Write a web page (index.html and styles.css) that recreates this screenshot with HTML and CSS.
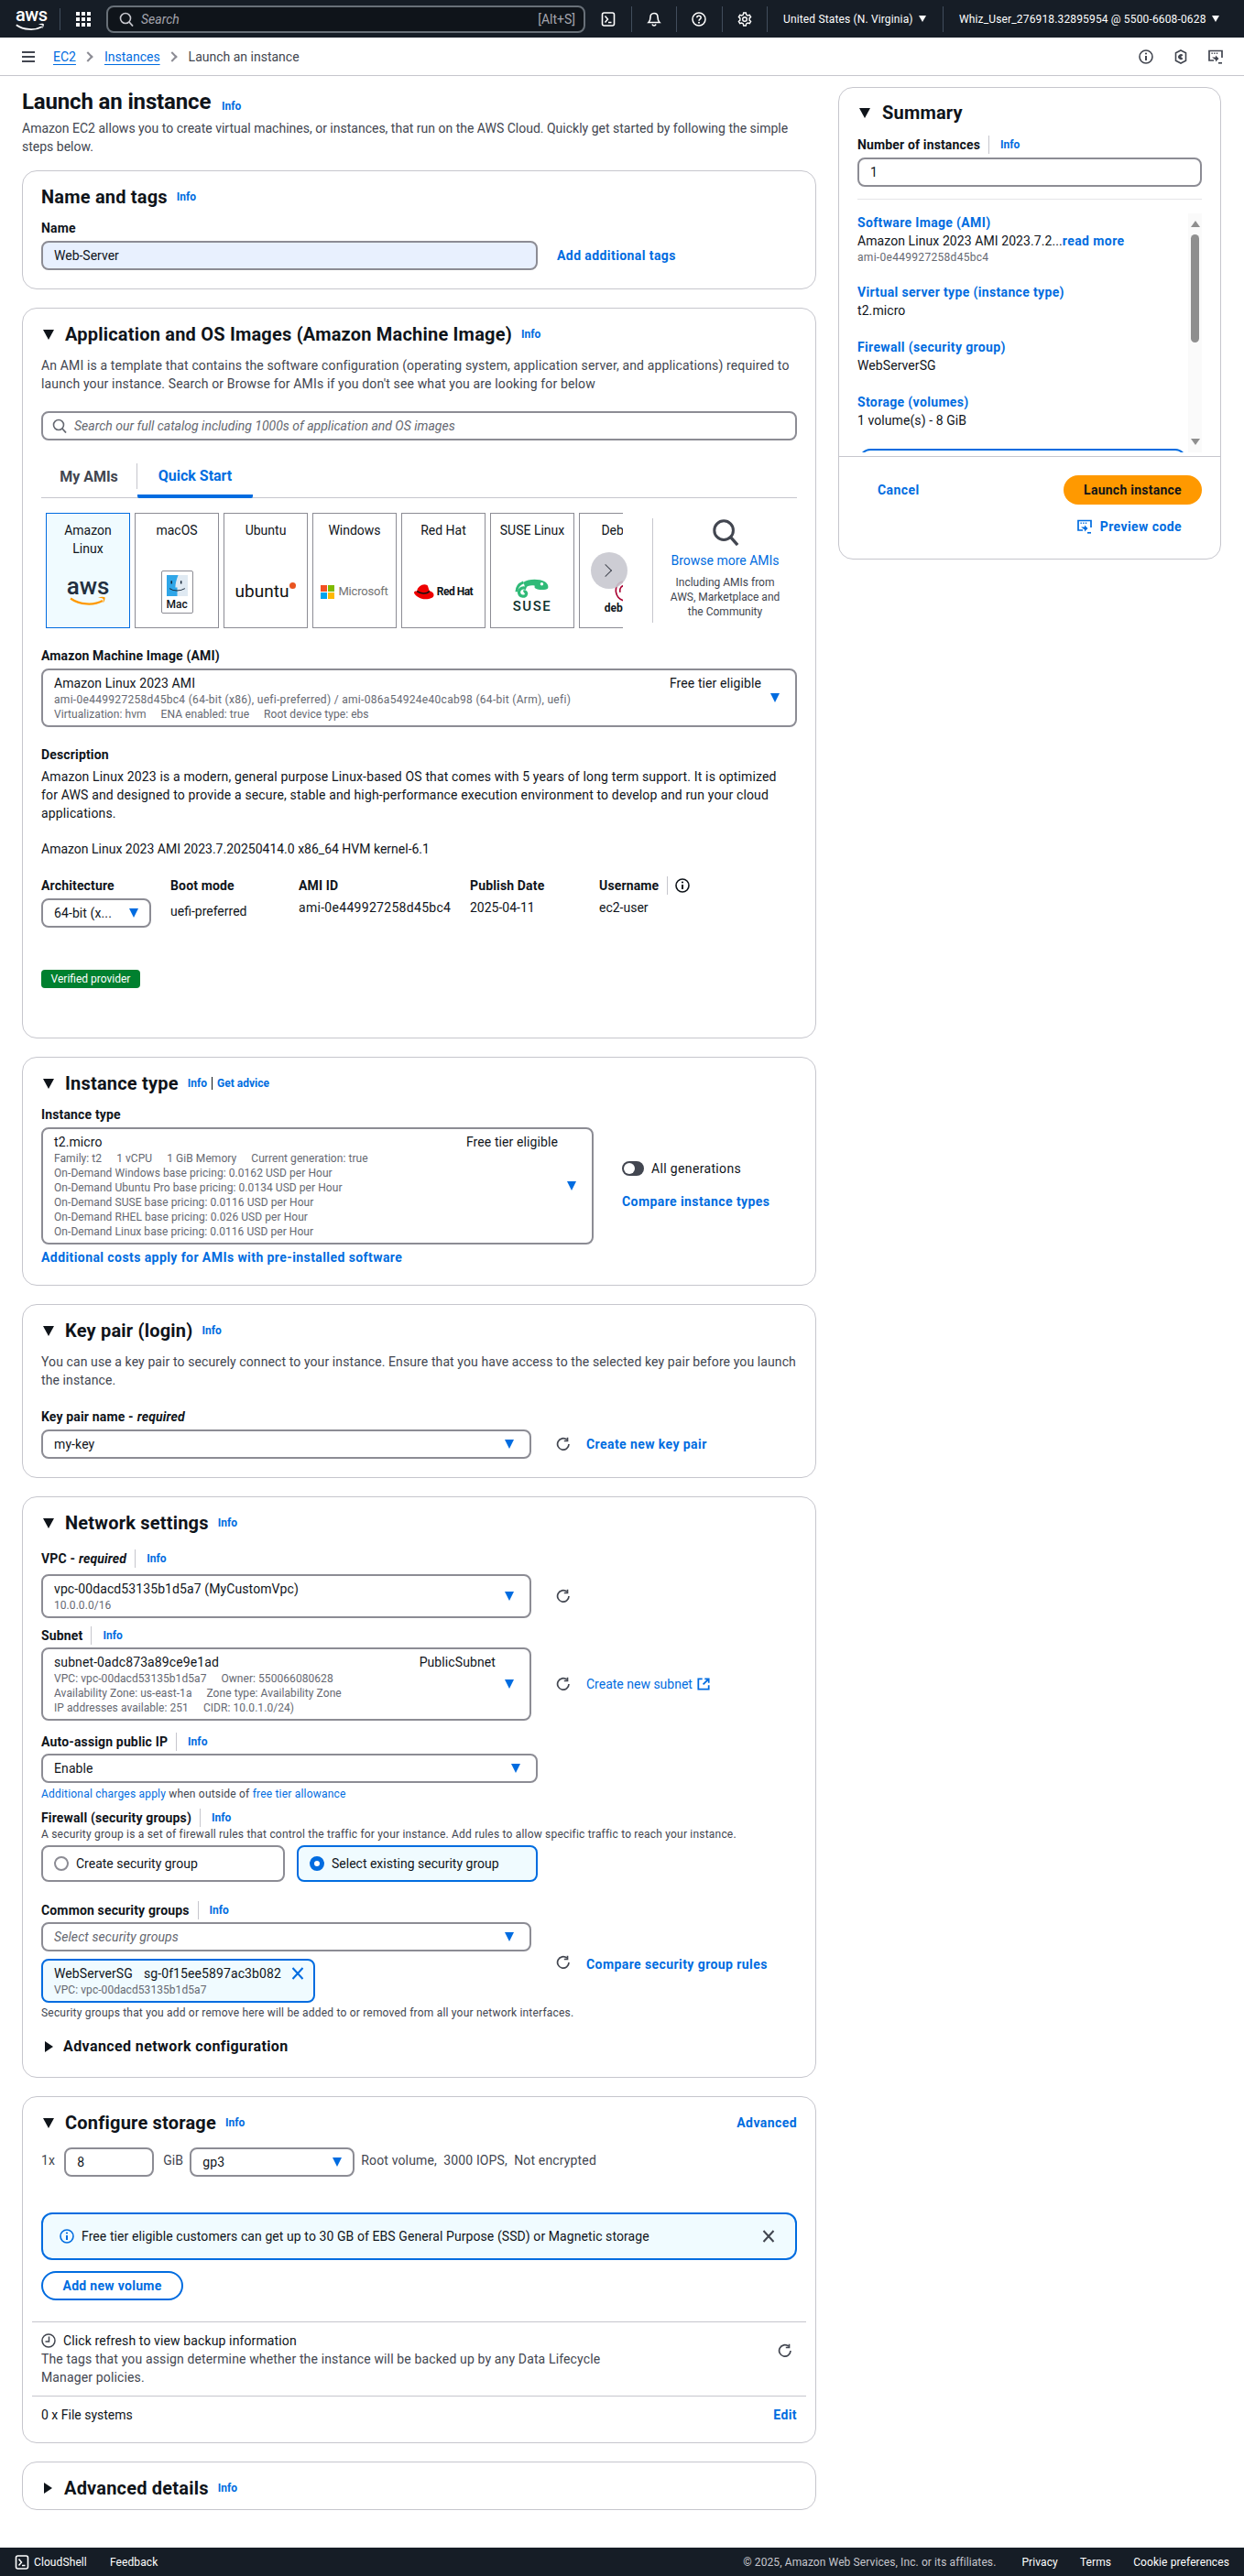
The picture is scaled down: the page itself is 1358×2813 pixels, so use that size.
FILE: index.html
```html
<!DOCTYPE html>
<html lang="en">
<head>
    <meta charset="UTF-8">
    <title>Launch an instance | EC2</title>
    <link rel="stylesheet" href="styles.css">
</head>
<body>
<svg class="sprite" xmlns="http://www.w3.org/2000/svg">
    <symbol id="i-search" viewBox="0 0 16 16"><circle cx="7" cy="7" r="5.5" fill="none" stroke="currentColor" stroke-width="1.6"/><path d="M11 11l4 4.5" stroke="currentColor" stroke-width="1.8" fill="none"/></symbol>
    <symbol id="i-shell" viewBox="0 0 16 16"><rect x="1.5" y="1" width="13" height="14" rx="2" fill="none" stroke="currentColor" stroke-width="1.6"/><path d="M4.5 4.5L7.5 8l-3 3.5M8 11.5h3.5" fill="none" stroke="currentColor" stroke-width="1.5"/></symbol>
    <symbol id="i-bell" viewBox="0 0 16 16"><path d="M8 1.5c-2.8 0-4 2-4 4.2 0 3-.6 4.3-2 5.8h12c-1.4-1.5-2-2.800-2-5.800 0-2.200-1.200-4.200-4-4.200zM6 13.500c.3 1 1 1.500 2 1.500s1.700-.5 2-1.500" fill="none" stroke="currentColor" stroke-width="1.600"/></symbol>
    <symbol id="i-help" viewBox="0 0 16 16"><circle cx="8" cy="8" r="7" fill="none" stroke="currentColor" stroke-width="1.500"/><path d="M5.800 6.200C5.800 5 6.800 4.300 8 4.300s2.200.8 2.200 1.900c0 1.700-2.200 1.700-2.200 3.500" fill="none" stroke="currentColor" stroke-width="1.500"/><circle cx="8" cy="11.800" r="1" fill="currentColor"/></symbol>
    <symbol id="i-gear" viewBox="0 0 16 16"><path d="M6.700 1h2.600l.4 2 1.700 1 1.900-.7 1.300 2.300-1.500 1.300v2.200l1.500 1.300-1.300 2.300-1.900-.7-1.700 1-.4 2H6.700l-.4-2-1.700-1-1.900.7-1.300-2.300 1.500-1.300V6.900L1.400 5.600l1.300-2.300 1.900.7 1.700-1z" fill="none" stroke="currentColor" stroke-width="1.400"/><circle cx="8" cy="8" r="2.300" fill="none" stroke="currentColor" stroke-width="1.400"/></symbol>
    <symbol id="i-info" viewBox="0 0 16 16"><circle cx="8" cy="8" r="7" fill="none" stroke="currentColor" stroke-width="1.600"/><path d="M8 7v5" stroke="currentColor" stroke-width="2"/><circle cx="8" cy="4.500" r="1.100" fill="currentColor"/></symbol>
    <symbol id="i-hex" viewBox="0 0 16 16"><path d="M8 1l5.500 2.800v8.400L8 15l-5.500-2.800V3.800z" fill="none" stroke="currentColor" stroke-width="1.600"/><path d="M10.500 6.200A3 3 0 1 0 10.500 10L8 8z" fill="currentColor"/></symbol>
    <symbol id="i-code" viewBox="0 0 16 16"><path d="M6 12H1V1.500h14V9" fill="none" stroke="currentColor" stroke-width="1.700"/><path d="M3.500 4.200h1.300M6.200 4.200h1.300M8.900 4.200h1.300" stroke="currentColor" stroke-width="1.500"/><path d="M4 8.500h4v-2l3.500 3.500L8 13.500v-2" fill="currentColor"/><path d="M11 14.800h4" stroke="currentColor" stroke-width="1.700"/></symbol>
    <symbol id="i-refresh" viewBox="0 0 16 16"><path d="M11.800 3.200A6.200 6.200 0 1 0 14 8" fill="none" stroke="currentColor" stroke-width="1.700"/><path d="M12.500.8v3.700H8.800" fill="none" stroke="currentColor" stroke-width="1.700"/></symbol>
    <symbol id="i-ext" viewBox="0 0 16 16"><path d="M6.500 1.500H1.500v13h13v-5" fill="none" stroke="currentColor" stroke-width="2"/><path d="M9.500 1.500h5v5M14.500 1.500L7.500 8.500" fill="none" stroke="currentColor" stroke-width="2"/></symbol>
    <symbol id="i-x" viewBox="0 0 16 16"><path d="M2.500 2l11 12M13.500 2l-11 12" fill="none" stroke="currentColor" stroke-width="2"/></symbol>
    <symbol id="i-clock" viewBox="0 0 16 16"><circle cx="8" cy="8" r="7" fill="none" stroke="currentColor" stroke-width="1.500"/><path d="M8.500 3.500V9H4.500" fill="none" stroke="currentColor" stroke-width="1.500"/></symbol>
    <symbol id="i-smile" viewBox="0 0 40 12"><path d="M1 2.500c10 7 25 8 35 2.500" fill="none" stroke="currentColor" stroke-width="2.200"/><path d="M31 1.500c3-1 6-1 7.500-.3.500 1.500-.5 4.300-2 6.300.3-2 .6-3.500.2-4.600-1.500-.8-3.500-1.200-5.700-1.400z" fill="currentColor"/></symbol>
</svg>

<header class="top-nav">
    <div class="nav-logo">
        <span class="nav-aws">aws</span>
        <svg class="nav-smile"><use href="#i-smile"/></svg>
    </div>
    <span class="nav-sep"></span>
    <div class="nav-grid"><i></i><i></i><i></i><i></i><i></i><i></i><i></i><i></i><i></i></div>
    <div class="nav-search">
        <svg class="ic-16"><use href="#i-search"/></svg>
        <span class="nav-search-text">Search</span>
        <span class="nav-search-key">[Alt+S]</span>
    </div>
    <div class="nav-btn"><svg class="ic-16"><use href="#i-shell"/></svg></div>
    <div class="nav-btn sep-left"><svg class="ic-16"><use href="#i-bell"/></svg></div>
    <div class="nav-btn sep-left"><svg class="ic-16"><use href="#i-help"/></svg></div>
    <div class="nav-btn sep-left"><svg class="ic-16"><use href="#i-gear"/></svg></div>
    <div class="nav-menu region">United States (N. Virginia) <b class="nav-caret"></b></div>
    <div class="nav-menu user">Whiz_User_276918.32895954 @ 5500-6608-0628 <b class="nav-caret"></b></div>
</header>

<nav class="crumbs">
    <div class="burger"><i></i><i></i><i></i></div>
    <a class="crumb">EC2</a><span class="crumb-arrow"></span>
    <a class="crumb">Instances</a><span class="crumb-arrow"></span>
    <span class="crumb-here">Launch an instance</span>
    <div class="crumb-tools">
        <svg class="ic-16"><use href="#i-info"/></svg>
        <svg class="ic-16"><use href="#i-hex"/></svg>
        <svg class="ic-16"><use href="#i-code"/></svg>
    </div>
</nav>

<main class="page">
    <div class="col-main">
        <div class="page-head">
            <h1>Launch an instance <a class="info">Info</a></h1>
            <p>Amazon EC2 allows you to create virtual machines, or instances, that run on the AWS Cloud. Quickly get started by following the simple steps below.</p>
        </div>

        <section class="card">
            <h2>Name and tags <a class="info">Info</a></h2>
            <div class="label mt-13">Name</div>
            <div class="name-row">
                <div class="input filled">Web-Server</div>
                <a class="link">Add additional tags</a>
            </div>
        </section>

        <section class="card">
            <h2><span class="tri-down"></span>Application and OS Images (Amazon Machine Image) <a class="info">Info</a></h2>
            <p class="text mt-13">An AMI is a template that contains the software configuration (operating system, application server, and applications) required to launch your instance. Search or Browse for AMIs if you don't see what you are looking for below</p>
            <div class="input search-input">
                <svg class="ic-16"><use href="#i-search"/></svg>
                <em>Search our full catalog including 1000s of application and OS images</em>
            </div>
            <div class="tabs">
                <span class="tab">My AMIs</span>
                <span class="tab active">Quick Start</span>
            </div>
            <div class="tile-row">
                <div class="tile-strip">
                    <div class="tile selected">
                        <div>Amazon Linux</div>
                        <div class="tile-logo">
                            <span class="logo-aws">aws</span>
                            <svg class="logo-smile"><use href="#i-smile"/></svg>
                        </div>
                    </div>
                    <div class="tile">
                        <div>macOS</div>
                        <div class="tile-logo">
                            <div class="logo-mac">
                                <svg viewBox="0 0 22 22" class="finder"><rect width="22" height="22" fill="#dfe9f2"/><path d="M0 0h12c-2 5-3 9-3 13h2v9H0z" fill="#2fa6e8"/><path d="M5 6v3M15 6v3" stroke="#123" stroke-width="1.400"/><path d="M3 14c4 3 11 3 16 0" stroke="#123" fill="none"/></svg>
                                <span>Mac</span>
                            </div>
                        </div>
                    </div>
                    <div class="tile">
                        <div>Ubuntu</div>
                        <div class="tile-logo">
                            <div class="logo-ubuntu">ubuntu<i></i></div>
                        </div>
                    </div>
                    <div class="tile">
                        <div>Windows</div>
                        <div class="tile-logo">
                            <div class="logo-ms">
                                <div class="ms-squares"><i></i><i></i><i></i><i></i></div>
                                <span>Microsoft</span>
                            </div>
                        </div>
                    </div>
                    <div class="tile">
                        <div>Red Hat</div>
                        <div class="tile-logo">
                            <div class="logo-rh">
                                <svg viewBox="0 0 24 20" class="rh-hat"><path d="M7 3c2-2 6-3 9-1 1 2 1.500 5 2.500 6.500 3 1 5 2.500 5 5 0 3-4 5-10 5S1 14 0 11c0-2 1.500-2.500 3.500-2 0-2.500 1.500-4 3.500-6z" fill="#e00"/><path d="M3.500 9c4 3 11 4 15 0" stroke="#111" stroke-width="1.800" fill="none"/></svg>
                                <span>Red Hat</span>
                            </div>
                        </div>
                    </div>
                    <div class="tile">
                        <div>SUSE Linux</div>
                        <div class="tile-logo bottom">
                            <svg viewBox="0 0 40 22" class="suse-mark"><path d="M10 4C15 0 28 0 34 3c4 2 5 6 4 8-2 2-8 2-12 1-3-1-4-2-3-4-4-1-9 0-11 3z" fill="#30ba78"/><path d="M13 11C7 9 4 13 5 17c1 4 7 4 8 1 1-2-1-4-3-3" fill="none" stroke="#30ba78" stroke-width="3.400"/><path d="M10 4c-5 2-8 6-8 11" fill="none" stroke="#30ba78" stroke-width="3"/><circle cx="31" cy="6" r="1.800" fill="#fff"/></svg>
                            <span class="logo-suse">SUSE</span>
                        </div>
                    </div>
                    <div class="tile">
                        <div>Debian</div>
                        <div class="tile-logo bottom">
                            <svg viewBox="0 0 24 26" class="deb-mark"><path d="M15 2C8 3 5 9 6 15c1 5 5 9 10 10M15 7c-4 1-5 5-4 8" fill="none" stroke="#a80030" stroke-width="1.800"/></svg>
                            <span class="logo-deb">debian</span>
                        </div>
                    </div>
                </div>
                <button class="tile-next"><span class="chev"></span></button>
                <div class="browse">
                    <svg class="browse-ic"><use href="#i-search"/></svg>
                    <a class="link-plain">Browse more AMIs</a>
                    <small>Including AMIs from AWS, Marketplace and the Community</small>
                </div>
            </div>

            <div class="label mt-20">Amazon Machine Image (AMI)</div>
            <div class="sel mt-4">
                <div class="sel-body">
                    <div class="sel-top"><span>Amazon Linux 2023 AMI</span><span>Free tier eligible</span></div>
                    <div class="sub num">ami-0e449927258d45bc4 (64-bit (x86), uefi-preferred) / ami-086a54924e40cab98 (64-bit (Arm), uefi)</div>
                    <div class="sub spaced"><span>Virtualization: hvm</span><span>ENA enabled: true</span><span>Root device type: ebs</span></div>
                </div>
                <span class="arrow"></span>
            </div>

            <div class="label mt-20">Description</div>
            <p class="text-dark wide-text mt-4">Amazon Linux 2023 is a modern, general purpose Linux-based OS that comes with 5 years of long term support. It is optimized for AWS and designed to provide a secure, stable and high-performance execution environment to develop and run your cloud applications.</p>
            <p class="text-dark mt-19">Amazon Linux 2023 AMI 2023.7.20250414.0 x86_64 HVM kernel-6.1</p>

            <div class="ami-meta">
                <div class="meta-arch">
                    <div class="label">Architecture</div>
                    <div class="sel arch mt-4"><div class="sel-body">64-bit (x...</div><span class="arrow"></span></div>
                </div>
                <div class="meta-boot">
                    <div class="label">Boot mode</div>
                    <div class="text-dark boot-val">uefi-preferred</div>
                </div>
                <div class="meta-id">
                    <div class="label">AMI ID</div>
                    <div class="text-dark meta-val num">ami-0e449927258d45bc4</div>
                </div>
                <div class="meta-date">
                    <div class="label">Publish Date</div>
                    <div class="text-dark meta-val">2025-04-11</div>
                </div>
                <div>
                    <div class="label label-tools">Username<span class="bar"></span><svg class="ic-16 ink"><use href="#i-info"/></svg></div>
                    <div class="text-dark meta-val">ec2-user</div>
                </div>
            </div>
            <span class="badge">Verified provider</span>
        </section>

        <section class="card">
            <h2><span class="tri-down"></span>Instance type <a class="info">Info</a><span class="head-bar"></span><a class="info near">Get advice</a></h2>
            <div class="label mt-13">Instance type</div>
            <div class="type-row mt-4">
                <div class="sel type-sel">
                    <div class="sel-body">
                        <div class="sel-top"><span>t2.micro</span><span>Free tier eligible</span></div>
                        <div class="sub spaced"><span>Family: t2</span><span>1 vCPU</span><span>1 GiB Memory</span><span>Current generation: true</span></div>
                        <div class="sub">On-Demand Windows base pricing: 0.0162 USD per Hour</div>
                        <div class="sub">On-Demand Ubuntu Pro base pricing: 0.0134 USD per Hour</div>
                        <div class="sub">On-Demand SUSE base pricing: 0.0116 USD per Hour</div>
                        <div class="sub">On-Demand RHEL base pricing: 0.026 USD per Hour</div>
                        <div class="sub">On-Demand Linux base pricing: 0.0116 USD per Hour</div>
                    </div>
                    <span class="arrow"></span>
                </div>
                <div class="type-side">
                    <div class="toggle-row"><span class="toggle"></span><span class="text-dark gens">All generations</span></div>
                    <a class="link">Compare instance types</a>
                </div>
            </div>
            <a class="link block mt-4">Additional costs apply for AMIs with pre-installed software</a>
        </section>

        <section class="card">
            <h2><span class="tri-down"></span>Key pair (login) <a class="info">Info</a></h2>
            <p class="text key-text mt-13">You can use a key pair to securely connect to your instance. Ensure that you have access to the selected key pair before you launch the instance.</p>
            <div class="label mt-20">Key pair name - <em>required</em></div>
            <div class="action-row mt-4">
                <div class="sel wide"><div class="sel-body">my-key</div><span class="arrow"></span></div>
                <svg class="ic-16 refresh"><use href="#i-refresh"/></svg>
                <a class="link">Create new key pair</a>
            </div>
        </section>

        <section class="card">
            <h2><span class="tri-down"></span>Network settings <a class="info">Info</a></h2>
            <div class="label mt-18">VPC - <em>required</em><span class="bar"></span><a class="info">Info</a></div>
            <div class="action-row mt-7">
                <div class="sel wide">
                    <div class="sel-body">
                        <div>vpc-00dacd53135b1d5a7 (MyCustomVpc)</div>
                        <div class="sub">10.0.0.0/16</div>
                    </div>
                    <span class="arrow"></span>
                </div>
                <svg class="ic-16 refresh"><use href="#i-refresh"/></svg>
            </div>
            <div class="label mt-9">Subnet<span class="bar"></span><a class="info">Info</a></div>
            <div class="action-row mt-3">
                <div class="sel wide">
                    <div class="sel-body">
                        <div class="sel-top"><span>subnet-0adc873a89ce9e1ad</span><span>PublicSubnet</span></div>
                        <div class="sub spaced"><span>VPC: vpc-00dacd53135b1d5a7</span><span>Owner: 550066080628</span></div>
                        <div class="sub spaced"><span>Availability Zone: us-east-1a</span><span>Zone type: Availability Zone</span></div>
                        <div class="sub spaced"><span>IP addresses available: 251</span><span>CIDR: 10.0.1.0/24)</span></div>
                    </div>
                    <span class="arrow"></span>
                </div>
                <svg class="ic-16 refresh"><use href="#i-refresh"/></svg>
                <a class="link-plain">Create new subnet <svg class="ic-14"><use href="#i-ext"/></svg></a>
            </div>
            <div class="label mt-13">Auto-assign public IP<span class="bar"></span><a class="info">Info</a></div>
            <div class="sel wider mt-3"><div class="sel-body">Enable</div><span class="arrow"></span></div>
            <div class="note mt-4"><a>Additional charges apply</a> when outside of <a>free tier allowance</a></div>
            <div class="label mt-8">Firewall (security groups)<span class="bar"></span><a class="info">Info</a></div>
            <div class="note">A security group is a set of firewall rules that control the traffic for your instance. Add rules to allow specific traffic to reach your instance.</div>
            <div class="radio-row mt-4">
                <div class="radio-box"><span class="radio"></span>Create security group</div>
                <div class="radio-box on"><span class="radio"></span>Select existing security group</div>
            </div>
            <div class="label mt-21">Common security groups<span class="bar"></span><a class="info">Info</a></div>
            <div class="action-row top mt-3">
                <div class="wide">
                    <div class="sel"><div class="sel-body"><em class="placeholder">Select security groups</em></div><span class="arrow"></span></div>
                    <div class="token">
                        <div>
                            <div class="token-top"><span>WebServerSG</span><span>sg-0f15ee5897ac3b082</span></div>
                            <div class="sub">VPC: vpc-00dacd53135b1d5a7</div>
                        </div>
                        <svg class="ic-16 token-x"><use href="#i-x"/></svg>
                    </div>
                </div>
                <svg class="ic-16 refresh compare-gap"><use href="#i-refresh"/></svg>
                <a class="link compare-gap">Compare security group rules</a>
            </div>
            <div class="note hint">Security groups that you add or remove here will be added to or removed from all your network interfaces.</div>
            <div class="adv-net"><span class="tri-right"></span>Advanced network configuration</div>
        </section>

        <section class="card">
            <h2 class="spread"><span><span class="tri-down"></span>Configure storage <a class="info">Info</a></span><a class="link">Advanced</a></h2>
            <div class="vol-row">
                <span class="vol-txt">1x</span>
                <div class="input vol-size">8</div>
                <span class="vol-txt">GiB</span>
                <div class="sel vol-type"><div class="sel-body">gp3</div><span class="arrow"></span></div>
                <span class="vol-txt">Root volume,&nbsp; 3000 IOPS,&nbsp; Not encrypted</span>
            </div>
            <div class="alert">
                <svg class="ic-16 blue"><use href="#i-info"/></svg>
                <span class="alert-text">Free tier eligible customers can get up to 30 GB of EBS General Purpose (SSD) or Magnetic storage</span>
                <svg class="ic-16 dark"><use href="#i-x"/></svg>
            </div>
            <button class="btn-outline">Add new volume</button>
            <div class="rule first"></div>
            <div class="backup">
                <div>
                    <div class="text-dark backup-title"><svg class="ic-16 dark"><use href="#i-clock"/></svg>Click refresh to view backup information</div>
                    <p class="text backup-text">The tags that you assign determine whether the instance will be backed up by any Data Lifecycle Manager policies.</p>
                </div>
                <svg class="ic-16 refresh backup-ic"><use href="#i-refresh"/></svg>
            </div>
            <div class="rule"></div>
            <div class="fs-row"><span class="text-dark">0 x File systems</span><a class="link">Edit</a></div>
        </section>

        <section class="card last">
            <h2><span class="tri-right big"></span>Advanced details <a class="info">Info</a></h2>
        </section>
    </div>

    <aside class="col-side">
        <section class="card summary">
            <h2 class="plain"><span class="tri-down wide-gap"></span>Summary</h2>
            <div class="label mt-13">Number of instances<span class="bar"></span><a class="info">Info</a></div>
            <div class="input mt-4">1</div>
            <div class="sum-rule"></div>
            <div class="sum-scroll">
                <div class="sum-list">
                    <a class="sum-title">Software Image (AMI)</a>
                    <div class="text-dark">Amazon Linux 2023 AMI 2023.7.2...<a class="link">read more</a></div>
                    <div class="sub num">ami-0e449927258d45bc4</div>
                    <a class="sum-title gap">Virtual server type (instance type)</a>
                    <div class="text-dark">t2.micro</div>
                    <a class="sum-title gap">Firewall (security group)</a>
                    <div class="text-dark">WebServerSG</div>
                    <a class="sum-title gap">Storage (volumes)</a>
                    <div class="text-dark">1 volume(s) - 8 GiB</div>
                    <div class="sum-clip"></div>
                </div>
                <div class="scrollbar">
                    <span class="sb-up"></span>
                    <span class="sb-thumb"></span>
                    <span class="sb-down"></span>
                </div>
            </div>
            <div class="sum-foot">
                <div class="sum-actions">
                    <a class="link">Cancel</a>
                    <button class="btn-primary">Launch instance</button>
                </div>
                <a class="link preview"><svg class="ic-16"><use href="#i-code"/></svg>Preview code</a>
            </div>
        </section>
    </aside>
</main>

<footer class="foot">
    <svg class="ic-16"><use href="#i-shell"/></svg>
    <span class="foot-shell">CloudShell</span>
    <span class="foot-feedback">Feedback</span>
    <span class="foot-copy">© 2025, Amazon Web Services, Inc. or its affiliates.</span>
    <span class="foot-link">Privacy</span>
    <span class="foot-link">Terms</span>
    <span class="foot-link">Cookie preferences</span>
</footer>
</body>
</html>
```

FILE: styles.css
```css
* {
    box-sizing: border-box;
}
body {
    margin: 0;
    font-family: Roboto, "Noto Sans", Arial, sans-serif;
    font-size: 14px;
    line-height: 20px;
    color: #0f141a;
    background-color: #fff;
}
p, h1, h2 {
    margin: 0;
}
a {
    color: #006ce0;
}
svg {
    display: block;
    flex: none;
}
.sprite {
    display: none;
}
.ic-16 {
    width: 16px;
    height: 16px;
}
.ic-14 {
    width: 14px;
    height: 14px;
    display: inline-block;
    vertical-align: -2px;
    margin-left: 2px;
}
.dark {
    color: #424650;
}
.ink {
    color: #0f141a;
}
.blue {
    color: #006ce0;
}
.num {
    letter-spacing: 0.3px;
}
.mt-3 { margin-top: 3px; }
.mt-4 { margin-top: 4px; }
.mt-7 { margin-top: 7px; }
.mt-8 { margin-top: 8px; }
.mt-9 { margin-top: 9px; }
.mt-13 { margin-top: 13px; }
.mt-18 { margin-top: 18px; }
.mt-19 { margin-top: 19px; }
.mt-20 { margin-top: 20px; }
.mt-21 { margin-top: 21px; }

/* top bar */
.top-nav {
    display: flex;
    align-items: center;
    height: 41px;
    background-color: #161d26;
    color: #d5dbdb;
    padding-left: 17px;
}
.nav-logo {
    width: 32px;
    height: 30px;
    position: relative;
}
.nav-aws {
    display: block;
    color: #fff;
    font-size: 20px;
    line-height: 20px;
    font-weight: 500;
    text-align: center;
    letter-spacing: -0.5px;
}
.nav-smile {
    width: 32px;
    height: 10px;
    color: #fff;
    margin-top: -1px;
}
.nav-sep {
    width: 1px;
    height: 24px;
    background-color: #414d5c;
    margin-left: 16px;
}
.nav-grid {
    display: grid;
    grid-template-columns: repeat(3, 4px);
    gap: 2px;
    margin-left: 17px;
}
.nav-grid i {
    width: 4px;
    height: 4px;
    background-color: #fff;
}
.nav-search {
    display: flex;
    align-items: center;
    width: 523px;
    height: 30px;
    margin-left: 17px;
    padding: 0 9px 0 12px;
    border: 2px solid #687078;
    border-radius: 8px;
    background-color: #0f141a;
    color: #c6c6cd;
}
.nav-search-text {
    font-style: italic;
    margin-left: 8px;
    flex: 1;
    color: #a4a4ad;
}
.nav-search-key {
    color: #a4a4ad;
}
.nav-btn {
    display: flex;
    align-items: center;
    justify-content: center;
    width: 49.500px;
    height: 28px;
    color: #fff;
}
.nav-btn.sep-left, .nav-menu {
    border-left: 1px solid #414d5c;
}
.nav-menu {
    display: flex;
    align-items: center;
    height: 28px;
    color: #fff;
    font-size: 12px;
    letter-spacing: 0.15px;
    white-space: nowrap;
    padding-left: 17px;
}
.nav-menu.region {
    width: 192px;
}
.nav-menu.user {
    flex: 1;
}
.nav-caret {
    width: 0;
    height: 0;
    border-left: 4.500px solid transparent;
    border-right: 4.500px solid transparent;
    border-top: 7px solid #fff;
    margin-left: 6px;
}

/* breadcrumb bar */
.crumbs {
    display: flex;
    align-items: center;
    height: 42px;
    padding: 0 23px 0 24px;
    border-bottom: 1px solid #c6c6cd;
}
.burger {
    width: 14px;
    margin-right: 20px;
}
.burger i {
    display: block;
    height: 2px;
    background-color: #424650;
    margin: 3px 0;
}
.crumb {
    color: #006ce0;
    text-decoration: underline;
    text-underline-offset: 3px;
}
.crumb-arrow {
    width: 8px;
    height: 8px;
    border-top: 2px solid #8c8c94;
    border-right: 2px solid #8c8c94;
    transform: rotate(45deg);
    margin: 0 14px 0 9px;
}
.crumb-here {
    color: #424650;
}
.crumb-tools {
    display: flex;
    gap: 22px;
    margin-left: auto;
    color: #424650;
}

/* layout */
.page {
    display: flex;
    gap: 24px;
    padding: 0 25px 0 24px;
}
.col-main {
    width: 867px;
}
.col-side {
    width: 418px;
    padding-top: 12px;
}
.page-head {
    padding-top: 13px;
    margin-bottom: 16px;
}
h1 {
    font-size: 24px;
    line-height: 30px;
    font-weight: 700;
    letter-spacing: -0.15px;
}
.page-head p {
    color: #424650;
    margin-top: 4px;
}
.card {
    border: 1px solid #c6c6cd;
    border-radius: 16px;
    padding: 15px 20px 20px;
    margin-bottom: 20px;
}
.card.last {
    padding-bottom: 12px;
    margin-bottom: 41px;
}
h2 {
    font-size: 20px;
    line-height: 24px;
    font-weight: 700;
    letter-spacing: 0.2px;
    display: flex;
    align-items: center;
    white-space: nowrap;
    padding-top: 1px;
    margin-bottom: -1px;
}
h2.plain {
    padding-top: 0;
    margin-bottom: 0;
}
h2.spread {
    justify-content: space-between;
}
h2.spread > span {
    display: flex;
    align-items: center;
}
h2.spread .link {
    font-size: 14px;
}
.info {
    font-size: 12px;
    font-weight: 700;
    line-height: 16px;
    letter-spacing: 0;
    color: #006ce0;
    margin-left: 10px;
}
h1 .info {
    position: relative;
    top: 1px;
    margin-left: 6px;
}
.info.near {
    margin-left: 5px;
}
.head-bar {
    width: 1px;
    height: 14px;
    background-color: #0f141a;
    margin-left: 5px;
}
.tri-down, .tri-right {
    display: inline-block;
    width: 0;
    height: 0;
    margin-left: 2px;
    flex: none;
}
.tri-down {
    border-left: 6px solid transparent;
    border-right: 6px solid transparent;
    border-top: 11px solid #0f141a;
    margin-right: 12px;
}
.tri-down.wide-gap {
    margin-right: 13px;
    margin-left: 2px;
}
.tri-right {
    border-top: 6px solid transparent;
    border-bottom: 6px solid transparent;
    border-left: 9px solid #0f141a;
    margin-left: 4px;
    margin-right: 11px;
}
.tri-right.big {
    margin-left: 3px;
    margin-right: 13px;
}
.label {
    font-weight: 700;
    letter-spacing: 0.15px;
    display: flex;
    align-items: center;
}
.label em {
    margin-left: 4px;
}
.bar {
    width: 1px;
    height: 20px;
    background-color: #c6c6cd;
    margin-left: 9px;
}
.label .info {
    margin-left: 12px;
}
.label-tools .ic-16 {
    margin-left: 8px;
}
.text {
    color: #424650;
    letter-spacing: 0.14px;
}
.key-text {
    letter-spacing: 0.1px;
}
.text-dark {
    color: #0f141a;
}
.wide-text {
    letter-spacing: 0.15px;
    max-width: 812px;
}
.sub {
    font-size: 12px;
    line-height: 16px;
    color: #656871;
    letter-spacing: 0.06px;
}
.sub.num {
    letter-spacing: 0.3px;
}
.sub.spaced {
    display: flex;
    gap: 16px;
}
.link {
    font-weight: 700;
    color: #006ce0;
    letter-spacing: 0.42px;
}
.link.block {
    display: block;
}
.link-plain {
    color: #006ce0;
}
.gens {
    letter-spacing: 0.35px;
}

/* inputs */
.input {
    height: 32px;
    border: 2px solid #8c8c94;
    border-radius: 8px;
    padding: 4px 12px;
}
.input.filled {
    width: 542px;
    background-color: #e8f0fe;
}
.name-row {
    display: flex;
    align-items: center;
    gap: 21px;
    margin-top: 4px;
}
.search-input {
    display: flex;
    align-items: center;
    gap: 8px;
    margin-top: 20px;
    padding-left: 10px;
    color: #656871;
}
.sel {
    display: flex;
    align-items: center;
    border: 2px solid #8c8c94;
    border-radius: 8px;
    padding: 4px 17px 4px 12px;
}
.sel-body {
    flex: 1;
    min-width: 0;
    letter-spacing: 0.1px;
}
.sel-top {
    display: flex;
    justify-content: space-between;
}
.arrow {
    width: 0;
    height: 0;
    margin-left: 10px;
    border-left: 5px solid transparent;
    border-right: 5px solid transparent;
    border-top: 10px solid #006ce0;
    flex: none;
}
.placeholder {
    color: #656871;
}

/* tabs */
.tabs {
    display: flex;
    height: 38px;
    margin-top: 25px;
    border-bottom: 1px solid #c6c6cd;
    font-weight: 700;
    font-size: 16px;
}
.tab {
    display: flex;
    align-items: center;
    justify-content: center;
    height: 28px;
    width: 105px;
    padding-top: 2px;
    color: #424650;
    border-right: 1px solid #c6c6cd;
}
.tab.active {
    width: 126px;
    height: 38px;
    padding: 2px 0 8px;
    color: #006ce0;
    border-right: 0;
    border-bottom: 4px solid #006ce0;
    border-radius: 0 0 2px 2px;
}

/* ami tiles */
.tile-row {
    position: relative;
    display: flex;
    margin-top: 16px;
    padding-left: 5px;
}
.tile-strip {
    display: flex;
    gap: 5px;
    width: 630px;
    overflow: hidden;
}
.tile {
    display: flex;
    flex-direction: column;
    flex: none;
    width: 92px;
    height: 126px;
    padding: 8px 6px 14px;
    border: 1px solid #8c8c94;
    text-align: center;
    white-space: normal;
}
.tile.selected {
    border-color: #006ce0;
    background-color: #f0fbff;
}
.tile-logo {
    display: flex;
    flex-direction: column;
    align-items: center;
    justify-content: center;
    height: 50px;
    margin: auto -6px 0;
}
.tile-logo.bottom {
    justify-content: flex-end;
}
.logo-aws {
    font-size: 26px;
    line-height: 22px;
    font-weight: 500;
    color: #232f3e;
}
.logo-smile {
    width: 42px;
    height: 12px;
    color: #ff9900;
}
.logo-mac {
    width: 35px;
    height: 47px;
    border: 1px solid #8c8c94;
    border-radius: 2px;
    background-color: #fff;
    padding: 4px 5px 0;
    font-size: 12px;
    font-weight: 500;
    line-height: 18px;
}
.finder {
    width: 23px;
    height: 23px;
}
.logo-ubuntu {
    font-size: 19px;
    line-height: 24px;
    color: #111;
    position: relative;
    padding-right: 8px;
}
.logo-ubuntu i {
    position: absolute;
    top: 2px;
    right: 0;
    width: 7px;
    height: 7px;
    border-radius: 50%;
    background-color: #e95420;
}
.logo-ms {
    display: flex;
    align-items: center;
    gap: 4px;
    color: #737373;
    font-size: 13px;
    letter-spacing: -0.2px;
}
.ms-squares {
    display: grid;
    grid-template-columns: 7px 7px;
    gap: 1px;
}
.ms-squares i {
    height: 7px;
}
.ms-squares i:nth-child(1) { background-color: #f25022; }
.ms-squares i:nth-child(2) { background-color: #7fba00; }
.ms-squares i:nth-child(3) { background-color: #00a4ef; }
.ms-squares i:nth-child(4) { background-color: #ffb900; }
.logo-rh {
    display: flex;
    align-items: center;
    gap: 3px;
    font-size: 12px;
    font-weight: 700;
    letter-spacing: -0.5px;
    white-space: nowrap;
}
.rh-hat {
    width: 22px;
    height: 19px;
}
.suse-mark {
    width: 38px;
    height: 21px;
}
.logo-suse {
    font-size: 15px;
    line-height: 18px;
    font-weight: 500;
    letter-spacing: 1.500px;
    color: #0c322c;
}
.deb-mark {
    width: 22px;
    height: 24px;
}
.logo-deb {
    font-size: 12px;
    line-height: 14px;
    font-weight: 700;
}
.tile-next {
    position: absolute;
    left: 600px;
    top: 43px;
    width: 40px;
    height: 40px;
    border: 0;
    border-radius: 50%;
    background-color: rgba(200, 200, 207, 0.9);
    padding: 0;
}
.chev {
    display: block;
    width: 10px;
    height: 10px;
    margin-left: 11px;
    border-top: 1.500px solid #424650;
    border-right: 1.500px solid #424650;
    transform: rotate(45deg);
}
.browse {
    display: flex;
    flex-direction: column;
    align-items: center;
    flex: 1;
    height: 114px;
    margin: 6px 0 0 32px;
    border-left: 1px solid #c6c6cd;
    text-align: center;
}
.browse-ic {
    width: 30px;
    height: 30px;
    color: #424650;
    margin-bottom: 6px;
}
.browse small {
    display: block;
    font-size: 12px;
    line-height: 16px;
    color: #424650;
    width: 130px;
    margin-top: 6px;
}

/* ami meta */
.ami-meta {
    display: flex;
    margin-top: 20px;
}
.meta-arch {
    width: 141px;
}
.meta-boot {
    width: 140px;
}
.meta-id {
    width: 187px;
}
.meta-date {
    width: 141px;
}
.sel.arch {
    width: 120px;
    padding-right: 12px;
    white-space: nowrap;
}
.boot-val {
    margin-top: 8px;
}
.meta-val {
    margin-top: 4px;
}
.badge {
    display: block;
    width: 108px;
    height: 20px;
    margin: 46px 0 34px;
    border-radius: 4px;
    background-color: #00802f;
    color: #fff;
    font-size: 12px;
    line-height: 20px;
    text-align: center;
}

/* instance type */
.type-row {
    display: flex;
    gap: 31px;
}
.type-sel {
    width: 603px;
}
.type-side {
    padding-top: 35px;
}
.toggle-row {
    display: flex;
    align-items: center;
    gap: 8px;
    margin-bottom: 16px;
}
.toggle {
    display: block;
    width: 24px;
    height: 16px;
    border-radius: 8px;
    background-color: #424650;
    position: relative;
}
.toggle::after {
    content: "";
    position: absolute;
    left: 2px;
    top: 2px;
    width: 12px;
    height: 12px;
    border-radius: 50%;
    background-color: #fff;
}

/* rows with refresh and a link */
.action-row {
    display: flex;
    align-items: center;
}
.action-row.top {
    align-items: flex-start;
}
.wide {
    width: 535px;
    flex: none;
}
.wider {
    width: 542px;
}
.refresh {
    color: #424650;
    margin: 0 17px 0 27px;
}
.compare-gap {
    margin-top: 36px;
}
.note {
    font-size: 12px;
    line-height: 16px;
    color: #424650;
    letter-spacing: 0.2px;
}
.note a {
    color: #006ce0;
}
.radio-row {
    display: grid;
    grid-template-columns: 266px 263px;
    gap: 13px;
}
.radio-box {
    display: flex;
    align-items: center;
    gap: 8px;
    height: 40px;
    padding-left: 12px;
    border: 2px solid #8c8c94;
    border-radius: 8px;
}
.radio-box.on {
    border-color: #006ce0;
    background-color: #f0fbff;
}
.radio {
    width: 16px;
    height: 16px;
    border: 2px solid #8c8c94;
    border-radius: 50%;
    background-color: #fff;
}
.radio-box.on .radio {
    border: 5px solid #006ce0;
}
.token {
    display: flex;
    justify-content: space-between;
    width: 299px;
    height: 48px;
    margin-top: 8px;
    padding: 4px 9px 4px 12px;
    border: 2px solid #006ce0;
    border-radius: 8px;
    background-color: #f0fbff;
}
.token-top {
    display: flex;
    gap: 12px;
    letter-spacing: 0.1px;
}
.token-x {
    color: #006ce0;
    margin-top: 2px;
}
.hint {
    margin-top: 3px;
}
.adv-net {
    display: flex;
    align-items: center;
    margin-top: 17px;
    font-size: 16px;
    line-height: 24px;
    font-weight: 700;
    letter-spacing: 0.4px;
    padding-bottom: 1px;
}

/* storage */
.vol-row {
    display: flex;
    align-items: center;
    margin-top: 16px;
}
.vol-txt {
    color: #424650;
    margin-top: -4px;
    letter-spacing: 0.15px;
}
.vol-size {
    width: 98px;
    margin: 0 10px 0 10px;
}
.vol-type {
    width: 180px;
    margin: 0 7px 0 7px;
    padding-right: 12px;
}
.alert {
    display: flex;
    align-items: center;
    height: 52px;
    margin-top: 39px;
    padding: 0 21px 0 18px;
    border: 2px solid #006ce0;
    border-radius: 12px;
    background-color: #f0fbff;
}
.alert-text {
    flex: 1;
    margin-left: 8px;
    letter-spacing: 0.08px;
}
.btn-outline {
    display: block;
    height: 32px;
    width: 155px;
    margin-top: 12px;
    padding: 0;
    border: 2px solid #006ce0;
    border-radius: 20px;
    background-color: #fff;
    color: #006ce0;
    font: 700 14px/20px Roboto, "Noto Sans", Arial, sans-serif;
    letter-spacing: 0.3px;
}
.rule {
    height: 1px;
    margin: 0 -10px;
    background-color: #c6c6cd;
}
.rule.first {
    margin-top: 23px;
}
.backup {
    display: flex;
    justify-content: space-between;
    padding: 10px 0;
}
.backup-title {
    display: flex;
    align-items: center;
    gap: 8px;
    letter-spacing: 0.12px;
}
.backup-text {
    width: 640px;
}
.backup-ic {
    margin: 13px 5px 0 0;
}
.fs-row {
    display: flex;
    justify-content: space-between;
    padding-top: 10px;
}

/* summary */
.summary {
    padding-bottom: 0;
    margin-bottom: 0;
    height: 516px;
}
.sum-rule {
    height: 1px;
    margin: 13px 0 15px;
    background-color: #e4e4e8;
}
.sum-scroll {
    display: flex;
    height: 261px;
    overflow: hidden;
}
.sum-list {
    flex: 1;
}
.sum-list .text-dark {
    letter-spacing: 0.08px;
}
.sum-title {
    display: block;
    font-weight: 700;
    color: #006ce0;
    letter-spacing: 0.35px;
}
.sum-title.gap {
    margin-top: 20px;
}
.sum-clip {
    height: 60px;
    margin: 21px 2px 0;
    border: 2px solid #006ce0;
    border-radius: 12px;
}
.scrollbar {
    position: relative;
    display: flex;
    flex-direction: column;
    align-items: center;
    width: 15px;
    background-color: #fafafa;
}
.sb-up, .sb-down {
    width: 0;
    height: 0;
    border-left: 5px solid transparent;
    border-right: 5px solid transparent;
}
.sb-up {
    margin-top: 8px;
    border-bottom: 7px solid #8f8f8f;
}
.sb-thumb {
    width: 9px;
    height: 118px;
    margin-top: 8px;
    border-radius: 5px;
    background-color: #8f8f8f;
}
.sb-down {
    margin-top: auto;
    margin-bottom: 8px;
    border-top: 7px solid #8f8f8f;
}
.sum-foot {
    margin: 4px -20px 0;
    padding: 20px 20px 0;
    border-top: 1px solid #c6c6cd;
}
.sum-actions {
    display: flex;
    align-items: center;
    justify-content: space-between;
    padding-left: 22px;
}
.btn-primary {
    width: 151px;
    height: 32px;
    padding: 0;
    border: 0;
    border-radius: 20px;
    background-color: #ff9900;
    color: #0f141a;
    font: 700 14px/20px Roboto, "Noto Sans", Arial, sans-serif;
    letter-spacing: 0.25px;
}
.preview {
    display: flex;
    align-items: center;
    justify-content: flex-end;
    gap: 9px;
    margin-top: 14px;
    padding-right: 22px;
}

/* footer */
.foot {
    display: flex;
    align-items: center;
    height: 31px;
    padding-left: 16px;
    background-color: #161d26;
    color: #fff;
    font-size: 12px;
    letter-spacing: 0.1px;
}
.foot-shell {
    margin-left: 5px;
}
.foot-feedback {
    margin-left: 25px;
}
.foot-copy {
    margin-left: auto;
    margin-right: 28px;
    color: #c6c6cd;
}
.foot-link {
    margin-right: 24px;
}
.foot-link:last-child {
    margin-right: 16px;
}
```
